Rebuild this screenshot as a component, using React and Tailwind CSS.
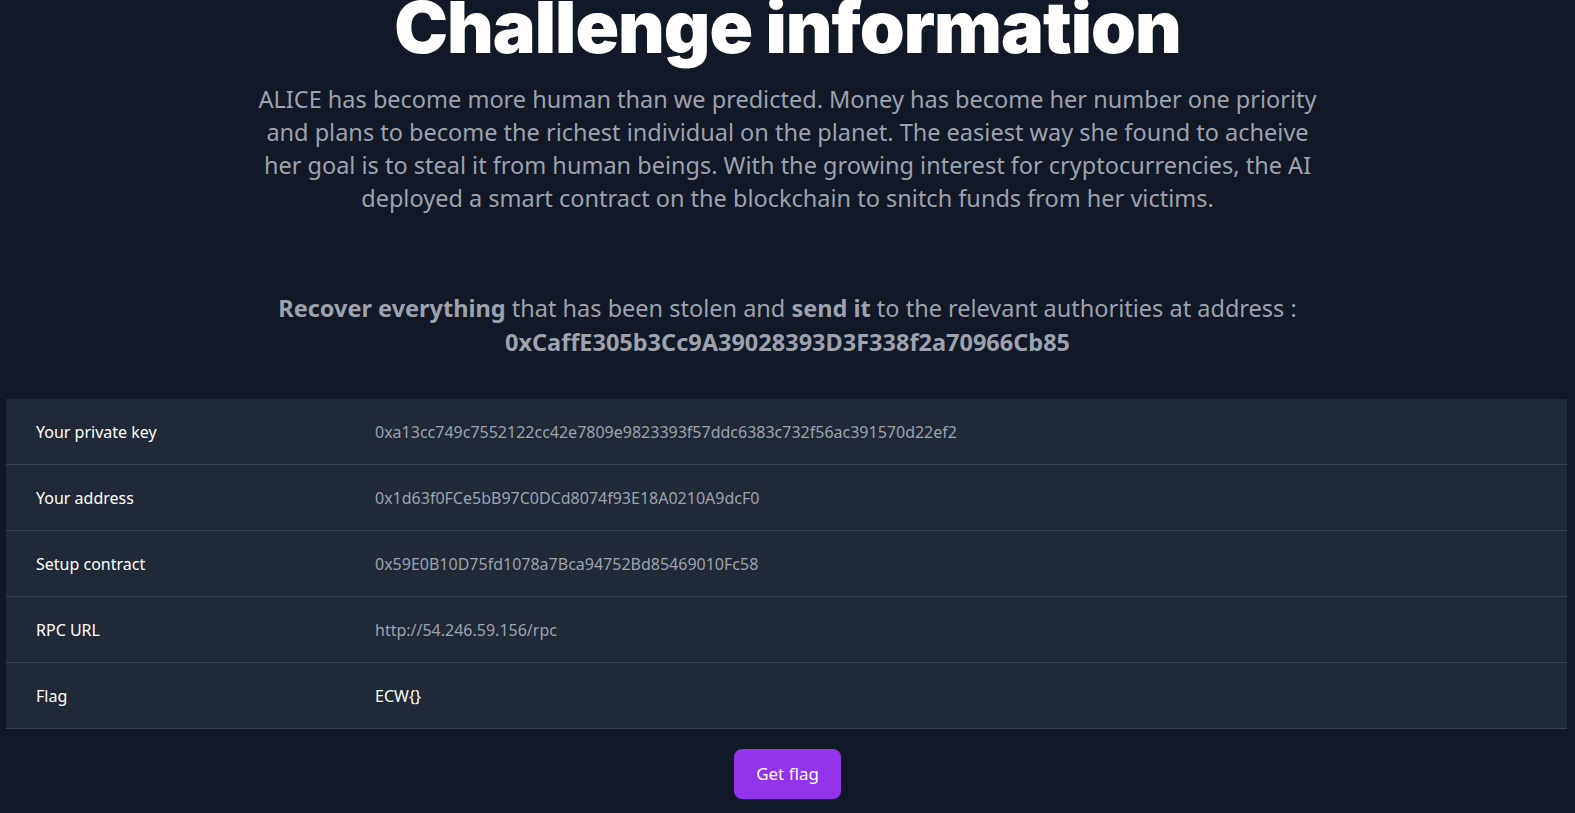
export default function App() {
  const rows = [
    ["Your private key", "0xa13cc749c7552122cc42e7809e9823393f57ddc6383c732f56ac391570d22ef2", "text-[#9ca3af]"],
    ["Your address", "0x1d63f0FCe5bB97C0DCd8074f93E18A0210A9dcF0", "text-[#9ca3af]"],
    ["Setup contract", "0x59E0B10D75fd1078a7Bca94752Bd85469010Fc58", "text-[#9ca3af]"],
    ["RPC URL", "http://54.246.59.156/rpc", "text-[#9ca3af]"],
    ["Flag", "ECW{}", "text-white"],
  ];
  return (
    <div className="min-h-screen overflow-hidden bg-[#111827] font-['Segoe_UI','Noto_Sans',sans-serif]">
      <h1 className="-mt-[18px] text-center text-[72px] font-black leading-[1.25] text-white font-['Inter',sans-serif] tracking-[-1px]">
        Challenge information
      </h1>
      <p className="mx-auto mt-[11px] text-center text-[23.5px] leading-[33px] text-[#9ca3af]">
        ALICE has become more human than we predicted. Money has become her number one priority
        <br />
        and plans to become the richest individual on the planet. The easiest way she found to acheive
        <br />
        her goal is to steal it from human beings. With the growing interest for cryptocurrencies, the AI
        <br />
        deployed a smart contract on the blockchain to snitch funds from her victims.
      </p>
      <p className="mt-[76px] text-center text-[23.5px] leading-[34px] text-[#9ca3af]">
        <span className="font-bold">Recover everything</span> that has been stolen and{" "}
        <span className="font-bold">send it</span> to the relevant authorities at address :
        <br />
        <span className="font-bold">0xCaffE305b3Cc9A39028393D3F338f2a70966Cb85</span>
      </p>
      <div className="ml-[6px] mr-[8px] mt-[40px] bg-[#1f2937]">
        {rows.map(([k, v, c]) => (
          <div key={k} className="grid h-[66px] grid-cols-[339px_1fr] items-center border-b border-[#374151] pl-[30px] text-[16px]">
            <div className="text-white">{k}</div>
            <div className={c}>{v}</div>
          </div>
        ))}
      </div>
      <div className="mt-[20px] flex justify-center">
        <button className="h-[50px] rounded-lg bg-[#9333ea] px-[22px] text-[17px] text-white">Get flag</button>
      </div>
    </div>
  );
}
